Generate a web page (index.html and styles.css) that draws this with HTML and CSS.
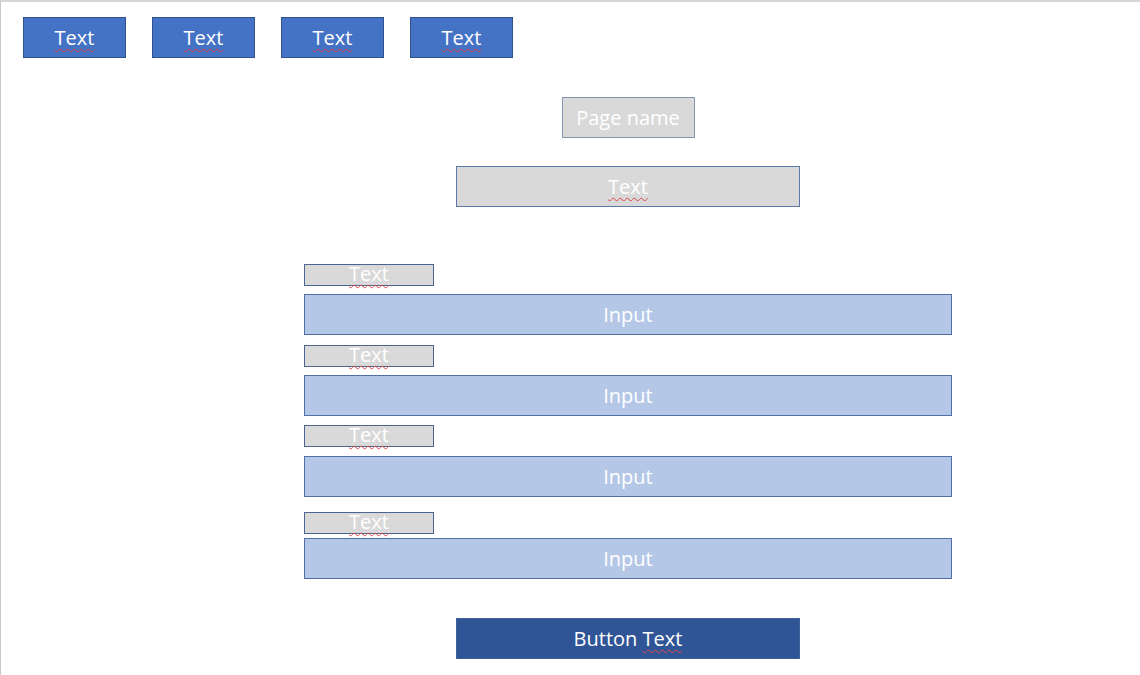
FILE: index.html
```
<!DOCTYPE html>
<html lang="en">
<head>
<meta charset="utf-8">
<title>Wireframe</title>
<link rel="stylesheet" href="styles.css">
</head>
<body>
<div class="frame">
  <nav class="nav">
    <div class="nav-item"><span class="spell">Text</span></div>
    <div class="nav-item"><span class="spell">Text</span></div>
    <div class="nav-item"><span class="spell">Text</span></div>
    <div class="nav-item"><span class="spell">Text</span></div>
  </nav>
  <main class="content">
    <div class="page-name">Page name</div>
    <div class="subtitle"><span class="spell">Text</span></div>

    <div class="label l1"><span class="spell">Text</span></div>
    <div class="input i1">Input</div>
    <div class="label l2"><span class="spell">Text</span></div>
    <div class="input i2">Input</div>
    <div class="label l3"><span class="spell">Text</span></div>
    <div class="input i3">Input</div>
    <div class="label l4"><span class="spell">Text</span></div>
    <div class="input i4">Input</div>

    <div class="button"><span>Button <span class="spell">Text</span></span></div>
  </main>
</div>
</body>
</html>
```
FILE: styles.css
```
* { box-sizing: border-box; }
html, body { margin: 0; padding: 0; background: #ffffff; }
body {
  font-family: "Open Sans", "Noto Sans", sans-serif;
  color: #ffffff;
}
.frame {
  width: 1140px;
  height: 675px;
  border-top: 2px solid #d6d6d6;
  border-left: 1px solid #c9c9c9;
  padding: 15px 0 0 22px;
}
.spell {
  text-decoration: underline wavy #e0464a;
  text-decoration-thickness: 1px;
  text-underline-offset: 3px;
  text-decoration-skip-ink: none;
}
.nav {
  display: flex;
  gap: 26px;
}
.nav-item {
  width: 103px;
  height: 41px;
  background: #4472c4;
  border: 1px solid #2f528f;
  display: flex;
  align-items: center;
  justify-content: center;
  font-size: 20px;
  line-height: 1;
}
.content {
  width: 648px;
  margin-left: 281px;
  display: flex;
  flex-direction: column;
  align-items: center;
}
.page-name, .subtitle, .label, .input, .button {
  display: flex;
  align-items: center;
  justify-content: center;
  line-height: 1;
  font-size: 20px;
}
.page-name {
  margin-top: 39px;
  width: 133px;
  height: 41px;
  background: #d9d9d9;
  border: 1px solid #8496b0;
}
.subtitle {
  margin-top: 28px;
  width: 344px;
  height: 41px;
  background: #d9d9d9;
  border: 1px solid #5b79a8;
}
.label {
  align-self: flex-start;
  width: 130px;
  height: 22px;
  background: #d9d9d9;
  border: 1px solid #4a6590;
  padding-bottom: 2px;
}
.input {
  width: 648px;
  height: 41px;
  background: #b4c7e7;
  border: 1px solid #4f6fa5;
}
.l1 { margin-top: 57px; }
.i1 { margin-top: 8px; }
.l2 { margin-top: 10px; }
.i2 { margin-top: 8px; }
.l3 { margin-top: 9px; }
.i3 { margin-top: 9px; }
.l4 { margin-top: 15px; }
.i4 { margin-top: 4px; }
.button {
  margin-top: 39px;
  width: 344px;
  height: 41px;
  background: #2f5597;
  border: 1px solid #41619b;
}
```
